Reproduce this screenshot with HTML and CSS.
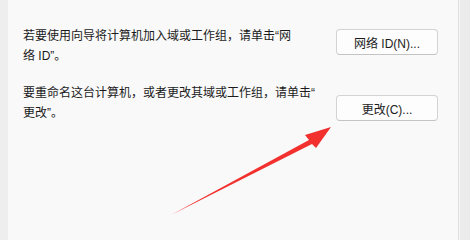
FILE: index.html
```html
<!DOCTYPE html>
<html lang="zh-CN">
<head>
  <meta charset="UTF-8" />
  <title>计算机名</title>
  <link rel="stylesheet" href="styles.css">
</head>
<body>
  <div class="gutter"></div>
  <div class="panel">
    <div class="row row-first">
      <p class="desc">若要使用向导将计算机加入域或工作组，请单击“网<br>络 ID”。</p>
      <button class="btn btn-first">网络 ID(N)...</button>
    </div>
    <div class="row row-second">
      <p class="desc">要重命名这台计算机，或者更改其域或工作组，请单击“<br>更改”。</p>
      <button class="btn btn-second">更改(C)...</button>
    </div>

    <!-- annotation arrow -->
    <svg class="arrow" width="470" height="240" viewBox="0 0 470 240">
      <polygon points="331,127 316,148 312,144 171,215 309,140 305,135" fill="#f2302e"/>
    </svg>
  </div>
  <div class="scroll"></div>
</body>
</html>
```

FILE: styles.css
```css
body {
  margin: 0;
  height: 240px;
  display: flex;
  background-color: #ebebeb;
  font-family: "Liberation Sans", "Noto Sans CJK SC", sans-serif;
  color: #1b1b1b;
  overflow: hidden;
}

.gutter {
  width: 8px;
  background-color: #eeeeee;
}

.panel {
  flex: 1;
  background-color: #f9f9f9;
  border-right: 1px solid #dedede;
  padding: 0 20px 0 15px;
}

.scroll {
  width: 10px;
  border-left: 1px solid #f7f7f7;
  background-color: #ebebeb;
}

.row {
  display: flex;
  justify-content: space-between;
  align-items: flex-start;
}

.row-first {
  padding-top: 26px;
}

.row-second {
  padding-top: 17px;
}

.desc {
  margin: 0;
  font-size: 12px;
  line-height: 20px;
  white-space: nowrap;
}

.btn {
  width: 102px;
  height: 26px;
  border: 1px solid #d3d3d3;
  border-bottom-color: #c4c4c4;
  border-radius: 4px;
  background-color: #fdfdfd;
  font-family: inherit;
  font-size: 12px;
  color: #1b1b1b;
  padding: 0;
}

.btn-first {
  margin-top: 3px;
}

.btn-second {
  margin-top: 12px;
}

.arrow {
  position: absolute;
  left: 0;
  top: 0;
}
```
